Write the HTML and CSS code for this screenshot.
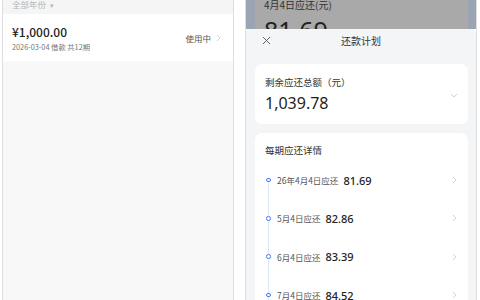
FILE: index.html
```html
<!DOCTYPE html>
<html lang="zh-CN">
<head>
    <meta charset="UTF-8">
    <meta name="viewport" content="width=device-width, initial-scale=1.0">
    <title>还款计划</title>
    <link rel="stylesheet" href="styles.css">
</head>
<body>
    <div class="phone loans">
        <div class="filter">全部年份 <span class="caret">&#9662;</span></div>
        <div class="loan-card">
            <div class="loan-info">
                <div class="loan-amount">¥1,000.00</div>
                <div class="loan-date">2026-03-04 借款 共12期</div>
            </div>
            <div class="loan-status">
                使用中
                <svg class="chev-right" width="5" height="8" viewBox="0 0 5 8"><polyline points="1,1 4,4 1,7" fill="none" stroke="#c8c8c8" stroke-width="0.8"/></svg>
            </div>
        </div>
    </div>

    <div class="phone plan">
        <div class="backdrop">
            <div class="dim-card">
                <div class="due-label">4月4日应还(元)</div>
                <div class="due-amount">81.69</div>
            </div>
        </div>
        <div class="sheet">
            <div class="sheet-head">
                <svg class="close" width="9" height="9" viewBox="0 0 9 9"><path d="M1 1 L8 8 M8 1 L1 8" stroke="#555" stroke-width="0.9" fill="none"/></svg>
                <div class="sheet-title">还款计划</div>
            </div>
            <div class="card total-card">
                <div>
                    <div class="total-label">剩余应还总额（元）</div>
                    <div class="total-value">1,039.78</div>
                </div>
                <svg class="chev-down" width="8" height="5" viewBox="0 0 8 5"><polyline points="1,1 4,4 7,1" fill="none" stroke="#c4c4c4" stroke-width="0.8"/></svg>
            </div>
            <div class="card detail-card">
                <div class="detail-title">每期应还详情</div>
                <div class="item first">
                    <div class="rail"><span class="line"></span><span class="dot"></span><span class="line"></span></div>
                    <div class="item-text"><span class="item-date">26年4月4日应还</span><span class="item-amount">81.69</span></div>
                    <svg class="chev-right" width="5" height="8" viewBox="0 0 5 8"><polyline points="1,1 4,4 1,7" fill="none" stroke="#c8c8c8" stroke-width="0.8"/></svg>
                </div>
                <div class="item">
                    <div class="rail"><span class="line"></span><span class="dot"></span><span class="line"></span></div>
                    <div class="item-text"><span class="item-date">5月4日应还</span><span class="item-amount">82.86</span></div>
                    <svg class="chev-right" width="5" height="8" viewBox="0 0 5 8"><polyline points="1,1 4,4 1,7" fill="none" stroke="#c8c8c8" stroke-width="0.8"/></svg>
                </div>
                <div class="item">
                    <div class="rail"><span class="line"></span><span class="dot"></span><span class="line"></span></div>
                    <div class="item-text"><span class="item-date">6月4日应还</span><span class="item-amount">83.39</span></div>
                    <svg class="chev-right" width="5" height="8" viewBox="0 0 5 8"><polyline points="1,1 4,4 1,7" fill="none" stroke="#c8c8c8" stroke-width="0.8"/></svg>
                </div>
                <div class="item">
                    <div class="rail"><span class="line"></span><span class="dot"></span><span class="line"></span></div>
                    <div class="item-text"><span class="item-date">7月4日应还</span><span class="item-amount">84.52</span></div>
                    <svg class="chev-right" width="5" height="8" viewBox="0 0 5 8"><polyline points="1,1 4,4 1,7" fill="none" stroke="#c8c8c8" stroke-width="0.8"/></svg>
                </div>
            </div>
        </div>
    </div>
</body>
</html>
```

FILE: styles.css
```css
body, html {
    margin: 0;
    padding: 0;
    height: 100%;
    overflow: hidden;
    background-color: #fff;
    font-family: "Noto Sans CJK SC", "Noto Sans", sans-serif;
}
body {
    display: flex;
    gap: 11px;
    padding-left: 2px;
    box-sizing: border-box;
}
.phone {
    width: 232px;
    height: 340px;
    border-left: 1px solid #dedede;
    border-right: 1px solid #dedede;
    box-sizing: border-box;
    display: flex;
    flex-direction: column;
    flex-shrink: 0;
}

/* left screen */
.loans {
    background-color: #f8f8f8;
}
.filter {
    height: 14px;
    background-color: #f5f5f5;
    padding-left: 9px;
    font-size: 8.5px;
    line-height: 9px;
    color: #b5b5b5;
    box-sizing: border-box;
}
.caret {
    font-size: 7px;
    margin-left: 2px;
}
.loan-card {
    height: 47px;
    background-color: #fff;
    display: flex;
    align-items: center;
    justify-content: space-between;
    padding: 0 12px 0 9px;
}
.loan-amount {
    font-size: 12px;
    line-height: 16px;
    font-weight: 500;
    color: #222;
}
.loan-date {
    font-size: 7.3px;
    line-height: 10px;
    margin-top: 2px;
    color: #777;
}
.loan-status {
    display: flex;
    align-items: center;
    gap: 5px;
    font-size: 8.5px;
    color: #555;
    margin-top: 1px;
    padding-left: 1px;
}

/* right screen */
.backdrop {
    height: 29px;
    flex-shrink: 0;
    background-color: #9ba4b2;
    padding: 0 8px 0 9px;
    overflow: hidden;
}
.dim-card {
    height: 100%;
    background-color: #a9a9a9;
    padding-left: 9px;
    overflow: hidden;
}
.due-label {
    font-size: 10px;
    line-height: 10px;
    color: #333;
}
.due-amount {
    font-family: "Noto Sans", sans-serif;
    font-size: 25px;
    line-height: 25px;
    margin-top: 8px;
    color: #222;
}
.sheet {
    flex: 1;
    background-color: #f4f5f7;
    border-radius: 5px 5px 0 0;
    display: flex;
    flex-direction: column;
}
.sheet-head {
    height: 23px;
    display: flex;
    align-items: center;
    padding-left: 16px;
}
.sheet-title {
    flex: 1;
    text-align: center;
    font-size: 10px;
    color: #333;
    margin-right: 25px;
}
.card {
    background-color: #fff;
    border-radius: 7px;
    margin: 0 8px 0 9px;
}
.total-card {
    margin-top: 12px;
    height: 60px;
    display: flex;
    align-items: center;
    justify-content: space-between;
    padding: 0 10px 0 10px;
    box-sizing: border-box;
}
.total-label {
    font-size: 9.5px;
    line-height: 12px;
    color: #333;
}
.total-value {
    font-family: "Noto Sans", sans-serif;
    font-size: 16px;
    line-height: 20px;
    margin-top: 5px;
    color: #1e1e1e;
}
.chev-down {
    margin-top: 2px;
}
.detail-card {
    margin-top: 9px;
    padding: 10px 11px 0 10px;
    height: 200px;
}
.detail-title {
    font-size: 9.5px;
    line-height: 14px;
    color: #333;
    margin-bottom: 4px;
}
.item {
    height: 38.3px;
    display: flex;
    align-items: center;
}
.rail {
    width: 7px;
    height: 100%;
    display: flex;
    flex-direction: column;
    align-items: center;
}
.line {
    flex: 1;
    width: 1px;
    background-color: #dbe6fb;
}
.first .line:first-child {
    background-color: transparent;
}
.dot {
    width: 2.6px;
    height: 2.6px;
    border: 1.9px solid #3b7cf2;
    border-radius: 50%;
    background-color: #fff;
}
.item-text {
    flex: 1;
    display: flex;
    align-items: center;
    gap: 5px;
    padding-left: 5px;
}
.item-date {
    font-size: 8.5px;
    color: #555;
}
.item-amount {
    font-family: "Noto Sans", sans-serif;
    font-size: 11px;
    font-weight: 500;
    color: #222;
}
```
